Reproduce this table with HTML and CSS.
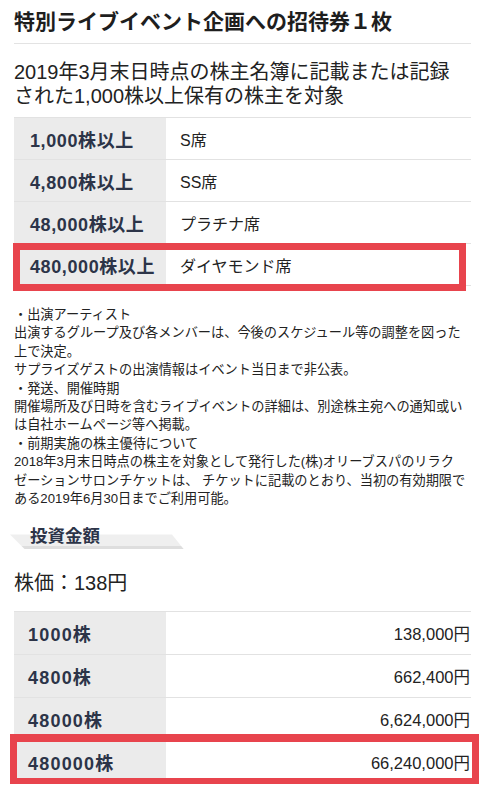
FILE: index.html
```html
<!DOCTYPE html>
<html lang="ja">
<head>
<meta charset="utf-8">
<link rel="stylesheet" href="styles.css">
</head>
<body>
<div class="page">
  <h1 class="title">特別ライブイベント企画への招待券１枚</h1>
  <p class="lead">2019年3月末日時点の株主名簿に記載または記録<br>された1,000株以上保有の株主を対象</p>

  <div class="table seats">
    <div class="row"><div class="key">1,000株以上</div><div class="val">S席</div></div>
    <div class="row"><div class="key">4,800株以上</div><div class="val">SS席</div></div>
    <div class="row"><div class="key">48,000株以上</div><div class="val">プラチナ席</div></div>
    <div class="row"><div class="key">480,000株以上</div><div class="val">ダイヤモンド席</div></div>
    <div class="mark mark1"></div>
  </div>

  <p class="notes">・出演アーティスト<br>出演するグループ及び各メンバーは、今後のスケジュール等の調整を図った<br>上で決定。<br>サプライズゲストの出演情報はイベント当日まで非公表。<br>・発送、開催時期<br>開催場所及び日時を含むライブイベントの詳細は、別途株主宛への通知或い<br>は自社ホームページ等へ掲載。<br>・前期実施の株主優待について<br>2018年3月末日時点の株主を対象として発行した(株)オリーブスパのリラク<br>ゼーションサロンチケットは、 チケットに記載のとおり、当初の有効期限で<br>ある2019年6月30日までご利用可能。</p>

  <h2 class="sec-head"><span class="sec-text">投資金額</span></h2>

  <p class="price">株価：138円</p>

  <div class="table invest">
    <div class="row"><div class="key">1000株</div><div class="val num">138,000円</div></div>
    <div class="row"><div class="key">4800株</div><div class="val num">662,400円</div></div>
    <div class="row"><div class="key">48000株</div><div class="val num">6,624,000円</div></div>
    <div class="row"><div class="key">480000株</div><div class="val num">66,240,000円</div></div>
    <div class="mark mark2"></div>
  </div>
</div>
</body>
</html>
```

FILE: styles.css
```css
* { box-sizing: border-box; }
html, body { margin: 0; padding: 0; background: #fff; }
body {
  font-family: "Liberation Sans", "Noto Sans CJK JP", sans-serif;
  color: #222;
}
.page {
  padding: 0 9px 0 14px;
  overflow: hidden;
}
.title {
  margin: 0;
  padding-top: 7px;
  padding-bottom: 6px;
  font-size: 21px;
  line-height: 30px;
  font-weight: 700;
  color: #1e1e1e;
  border-bottom: 1px solid #e3e3e3;
  white-space: nowrap;
}
.lead {
  margin: 16px 0 9px;
  font-size: 20px;
  line-height: 24px;
  color: #222;
  white-space: nowrap;
}
.table {
  position: relative;
  border-bottom: 1px solid #e2e2e2;
}
.row {
  display: grid;
  grid-template-columns: 152px 1fr;
  height: 42px;
  border-top: 1px solid #e2e2e2;
}
.invest .row { height: 43px; }
.key {
  background: #ebebeb;
  display: flex;
  align-items: center;
  padding-left: 16px;
  font-size: 18px;
  font-weight: 700;
  letter-spacing: 0.6px;
  color: #2c3448;
  white-space: nowrap;
}
.invest .key { padding-left: 14px; letter-spacing: 1.2px; }
.val {
  display: flex;
  align-items: center;
  padding-left: 14px;
  font-size: 16px;
  color: #222;
  white-space: nowrap;
}
.val.num {
  justify-content: flex-end;
  padding-left: 0;
  padding-right: 1px;
  font-size: 16.5px;
}
.mark {
  position: absolute;
  border: 7px solid #e8444d;
  pointer-events: none;
}
.mark1 {
  left: -1px;
  top: 126px;
  width: 453px;
  height: 48px;
}
.mark2 {
  left: -4px;
  top: 123px;
  width: 469px;
  height: 52px;
  border-top-width: 8px;
  border-bottom-width: 8px;
}
.notes {
  margin: 20px 0 0;
  font-size: 13.2px;
  line-height: 18.4px;
  color: #222;
  white-space: nowrap;
}
.sec-head {
  position: relative;
  margin: 16px 0 0;
  height: 26px;
  padding-left: 16px;
  font-size: 17.5px;
  line-height: 24px;
  font-weight: 700;
  color: #2c3448;
}
.sec-head::before {
  content: "";
  position: absolute;
  left: -4px;
  top: 10px;
  width: 174px;
  height: 15px;
  background: linear-gradient(to bottom, #efefef 0, #efefef 12px, #dedede 12px, #dedede 15px);
  clip-path: polygon(0 0, 162px 0, 174px 15px, 15px 15px);
}
.sec-text {
  position: relative;
}
.price {
  margin: 19px 0 14px;
  font-size: 20px;
  line-height: 28px;
  color: #222;
}
```
